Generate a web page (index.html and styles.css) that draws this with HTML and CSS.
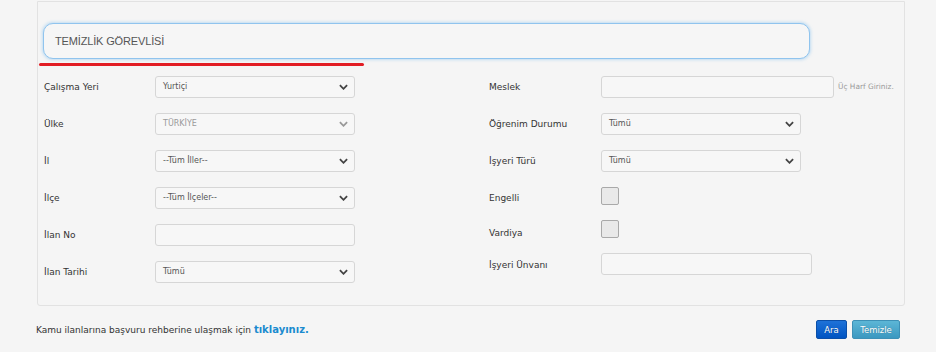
FILE: index.html
```html
<!DOCTYPE html>
<html lang="tr">
<head>
<meta charset="utf-8">
<title>İlan Arama</title>
<link rel="stylesheet" href="styles.css">
</head>
<body>
<div class="page">
  <div class="panel">
    <div class="search"><span class="search-text">TEMİZLİK GÖREVLİSİ</span></div>
    <div class="underline"></div>
    <div class="form">
      <div class="col">
        <div class="row"><span class="label">Çalışma Yeri</span><div class="select"><span>Yurtiçi</span><svg class="chev" viewBox="0 0 10 6"><path d="M1 1 L5 5 L9 1"/></svg></div></div>
        <div class="row"><span class="label">Ülke</span><div class="select disabled"><span>TÜRKİYE</span><svg class="chev" viewBox="0 0 10 6"><path d="M1 1 L5 5 L9 1"/></svg></div></div>
        <div class="row"><span class="label">İl</span><div class="select"><span>--Tüm İller--</span><svg class="chev" viewBox="0 0 10 6"><path d="M1 1 L5 5 L9 1"/></svg></div></div>
        <div class="row"><span class="label">İlçe</span><div class="select"><span>--Tüm İlçeler--</span><svg class="chev" viewBox="0 0 10 6"><path d="M1 1 L5 5 L9 1"/></svg></div></div>
        <div class="row"><span class="label">İlan No</span><div class="input w200"></div></div>
        <div class="row"><span class="label">İlan Tarihi</span><div class="select"><span>Tümü</span><svg class="chev" viewBox="0 0 10 6"><path d="M1 1 L5 5 L9 1"/></svg></div></div>
      </div>
      <div class="col right">
        <div class="row"><span class="label">Meslek</span><div class="input w233"></div><span class="hint">Üç Harf Giriniz.</span></div>
        <div class="row"><span class="label">Öğrenim Durumu</span><div class="select"><span>Tümü</span><svg class="chev" viewBox="0 0 10 6"><path d="M1 1 L5 5 L9 1"/></svg></div></div>
        <div class="row"><span class="label">İşyeri Türü</span><div class="select"><span>Tümü</span><svg class="chev" viewBox="0 0 10 6"><path d="M1 1 L5 5 L9 1"/></svg></div></div>
        <div class="row"><span class="label">Engelli</span><div class="checkbox cb-up"></div></div>
        <div class="row short"><span class="label">Vardiya</span><div class="checkbox cb-up2"></div></div>
        <div class="row short"><span class="label">İşyeri Ünvanı</span><div class="input w211"></div></div>
      </div>
    </div>
  </div>
  <div class="footer">
    <p class="guide">Kamu ilanlarına başvuru rehberine ulaşmak için <a class="link" href="#">tıklayınız.</a></p>
    <div class="buttons">
      <button class="btn btn-ara">Ara</button>
      <button class="btn btn-temizle">Temizle</button>
    </div>
  </div>
</div>
</body>
</html>
```
FILE: styles.css
```css
* { box-sizing: border-box; }
html, body { margin: 0; padding: 0; }
body {
  background: #f5f5f5;
  font-family: "DejaVu Sans", Verdana, sans-serif;
  color: #333;
  width: 936px;
  height: 352px;
  overflow: hidden;
}
.page {
  padding-left: 37px;
  padding-right: 31px;
}
.panel {
  margin-top: 1px;
  width: 868px;
  border: 1px solid #e2e2e2;
  border-radius: 0 0 3px 3px;
  background: #f5f5f5;
  padding: 0 0 15px 0;
}
.search {
  margin: 21px 0 0 5px;
  width: 767px;
  height: 36px;
  border: 1px solid #90c4ee;
  border-radius: 10px;
  box-shadow: 0 0 3px 1px rgba(150, 200, 240, 0.55);
  background: #f6f6f6;
  display: flex;
  align-items: center;
  padding-left: 11px;
}
.search-text {
  font-family: "Liberation Sans", Arial, sans-serif;
  font-size: 11px;
  color: #555;
  letter-spacing: -0.15px;
}
.underline {
  margin: 4px 0 0 1px;
  width: 325px;
  height: 3px;
  border-radius: 2px;
  background: #e21d24;
}
.form {
  margin-top: 2px;
  padding-left: 6px;
  display: grid;
  grid-template-columns: 445px 1fr;
}
.col { display: flex; flex-direction: column; }
.row {
  height: 37px;
  display: flex;
  align-items: center;
}
.row.short { height: 32px; }
.label {
  width: 111px;
  flex: none;
  font-size: 9px;
  color: #333;
  padding-top: 1px;
}
.right .label { width: 112px; }
.select {
  width: 200px;
  height: 22px;
  border: 1px solid #d6d6d6;
  border-radius: 3px;
  background: #f7f7f7;
  display: flex;
  align-items: center;
  justify-content: space-between;
  padding: 0 6px 0 7px;
  font-size: 8px;
  color: #555;
}
.select.disabled { color: #9a9a9a; }
.chev {
  width: 9px;
  height: 6px;
  fill: none;
  stroke: #444;
  stroke-width: 2;
}
.select.disabled .chev { stroke: #999; }
.input {
  height: 22px;
  border: 1px solid #d6d6d6;
  border-radius: 3px;
  background: #f7f7f7;
}
.w200 { width: 200px; }
.w233 { width: 233px; }
.w211 { width: 211px; }
.hint {
  margin-left: 4px;
  font-size: 7.4px;
  color: #999;
}
.checkbox {
  width: 18px;
  height: 18px;
  border: 1.5px solid #a9a9a9;
  border-radius: 2px;
  background: #e9e9e9;
}
.cb-up { margin-top: -3px; }
.cb-up2 { margin-top: -7px; }
.footer {
  margin-top: 14px;
  display: flex;
  align-items: center;
  justify-content: space-between;
  margin-left: -1px;
  height: 19px;
}
.guide {
  margin: 0;
  font-size: 9px;
  color: #333;
}
.link {
  font-weight: bold;
  font-size: 10px;
  color: #1b8bcf;
  text-decoration: none;
}
.buttons {
  display: flex;
  gap: 5px;
  margin-right: 5px;
}
.btn {
  height: 19px;
  padding: 0;
  border-radius: 2px;
  font-family: "DejaVu Sans", Verdana, sans-serif;
  font-size: 8.5px;
  color: #fff;
  text-shadow: 0 0 1px rgba(0,0,0,0.3);
}
.btn-ara {
  width: 31px;
  background: linear-gradient(#1e72d8, #0054c2);
  border: 1px solid #0b4fa8;
}
.btn-temizle {
  width: 48px;
  background: linear-gradient(#5cb6d6, #3b98c0);
  border: 1px solid #3d90b6;
}
```
